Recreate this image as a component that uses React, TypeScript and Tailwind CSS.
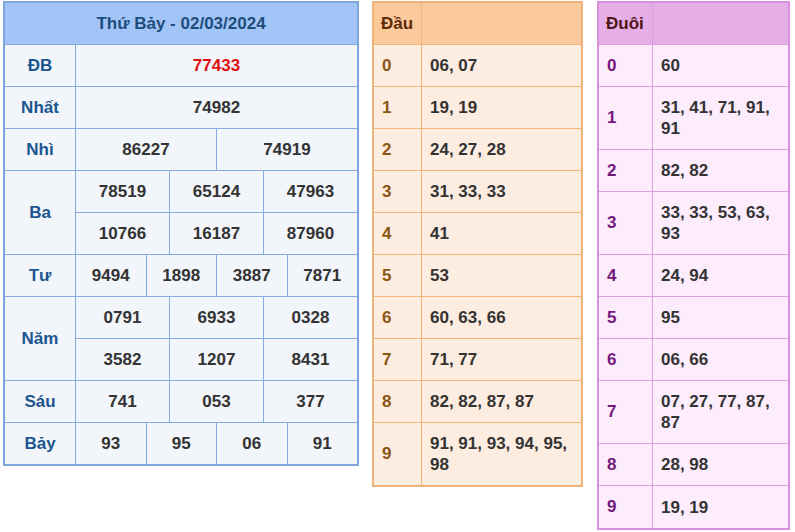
import React from 'react';

const prizes: { label: string; rows: string[][]; red?: boolean }[] = [
  { label: 'ĐB', rows: [['77433']], red: true },
  { label: 'Nhất', rows: [['74982']] },
  { label: 'Nhì', rows: [['86227', '74919']] },
  { label: 'Ba', rows: [['78519', '65124', '47963'], ['10766', '16187', '87960']] },
  { label: 'Tư', rows: [['9494', '1898', '3887', '7871']] },
  { label: 'Năm', rows: [['0791', '6933', '0328'], ['3582', '1207', '8431']] },
  { label: 'Sáu', rows: [['741', '053', '377']] },
  { label: 'Bảy', rows: [['93', '95', '06', '91']] },
];

const dau = ['06, 07', '19, 19', '24, 27, 28', '31, 33, 33', '41', '53', '60, 63, 66', '71, 77', '82, 82, 87, 87', '91, 91, 93, 94, 95, 98'];
const duoi = ['60', '31, 41, 71, 91, 91', '82, 82', '33, 33, 53, 63, 93', '24, 94', '95', '06, 66', '07, 27, 77, 87, 87', '28, 98', '19, 19'];

const PrizeTable = () => (
  <div className="w-[356px] border-2 border-[#7ea6dd] bg-[#f2f5fa]">
    <div className="h-[42px] flex items-center justify-center bg-[#a2c4f6] border-b border-[#86abdf] text-[17px] font-bold text-[#1c4d7d]">
      Thứ Bảy - 02/03/2024
    </div>
    {prizes.map((p, i) => (
      <div key={p.label} className={`flex ${i < prizes.length - 1 ? 'border-b border-[#86abdf]' : ''}`}>
        <div className="w-[71px] shrink-0 flex items-center justify-center border-r border-[#86abdf] font-bold text-[#1b5690] text-[17px]">
          {p.label}
        </div>
        <div className="flex-1 flex flex-col">
          {p.rows.map((r, j) => (
            <div key={j} className={`flex h-[41px] ${j < p.rows.length - 1 ? 'h-[42px] border-b border-[#86abdf]' : ''}`}>
              {r.map((v, k) => (
                <div
                  key={k}
                  className={`flex-1 flex items-center justify-center font-bold text-[17px] ${k < r.length - 1 ? 'border-r border-[#86abdf]' : ''} ${p.red ? 'text-[#e01010]' : 'text-[#333333]'}`}
                >
                  {v}
                </div>
              ))}
            </div>
          ))}
        </div>
      </div>
    ))}
  </div>
);

const LotoTable = ({
  title,
  items,
  width,
  labelW,
  tone,
}: {
  title: string;
  items: string[];
  width: string;
  labelW: string;
  tone: 'orange' | 'purple';
}) => {
  const o = tone === 'orange';
  const line = o ? 'border-[#efb57c]' : 'border-[#dc9fe0]';
  return (
    <div className={`${width} border-2 ${o ? 'border-[#efb27a] bg-[#fdece0]' : 'border-[#d990de] bg-[#fcecfc]'}`}>
      <div className={`flex h-[42px] border-b ${line} ${o ? 'bg-[#fcc99b]' : 'bg-[#e6aee7]'}`}>
        <div className={`${labelW} shrink-0 flex items-center pl-[7px] border-r ${line} font-bold text-[17px] ${o ? 'text-[#5e2a08]' : 'text-[#4e1616]'}`}>
          {title}
        </div>
        <div className="flex-1" />
      </div>
      {items.map((v, i) => (
        <div key={i} className={`flex min-h-[42px] ${i < items.length - 1 ? `border-b ${line}` : ''}`}>
          <div className={`${labelW} shrink-0 flex items-center pl-[8px] border-r ${line} font-bold text-[17px] ${o ? 'text-[#8a5614]' : 'text-[#74197a]'}`}>
            {i}
          </div>
          <div className="flex-1 flex items-center pl-[8px] pr-[6px] py-[10px] font-bold text-[17px] leading-[21px] text-[#333333]">
            {v}
          </div>
        </div>
      ))}
    </div>
  );
};

export default function App() {
  return (
    <div className="w-[795px] h-[532px] bg-white flex items-start gap-[13px] pl-[3px] pt-[1px]" style={{ fontFamily: '"Liberation Sans", Arial, sans-serif' }}>
      <PrizeTable />
      <LotoTable title="Đầu" items={dau} width="w-[211px]" labelW="w-[48px]" tone="orange" />
      <div className="ml-[1px]">
        <LotoTable title="Đuôi" items={duoi} width="w-[193px]" labelW="w-[54px]" tone="purple" />
      </div>
    </div>
  );
}
